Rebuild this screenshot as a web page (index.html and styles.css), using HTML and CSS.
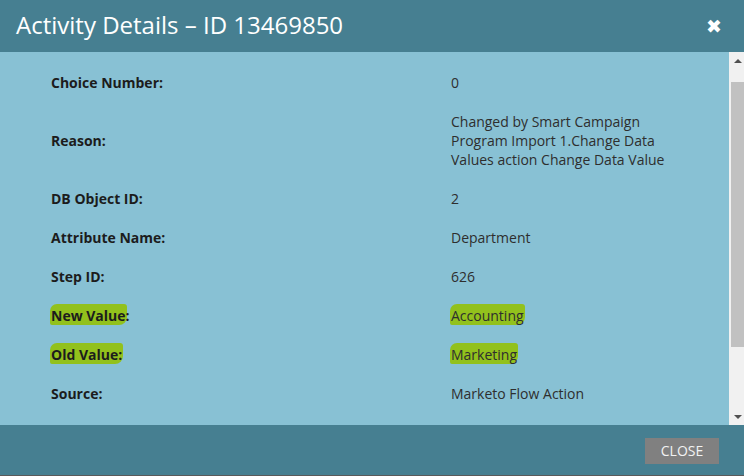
FILE: index.html
```html
<!DOCTYPE html>
<html>
<head>
<meta charset="utf-8">
<link rel="stylesheet" href="styles.css">
</head>
<body>
<div class="dialog">
  <div class="header">
    <div class="title">Activity Details – ID 13469850</div>
    <div class="close-x">&#x2716;</div>
  </div>
  <div class="body">
    <div class="content">
      <div class="details">
        <div class="label">Choice Number:</div><div class="value">0</div>
        <div class="label mid">Reason:</div><div class="value">Changed by Smart Campaign<br>Program Import 1.Change Data<br>Values action Change Data Value</div>
        <div class="label">DB Object ID:</div><div class="value">2</div>
        <div class="label">Attribute Name:</div><div class="value">Department</div>
        <div class="label">Step ID:</div><div class="value">626</div>
        <div class="label"><span class="hl">New Value</span>:</div><div class="value"><span class="hl">Accounting</span></div>
        <div class="label"><span class="hl">Old Value:</span></div><div class="value"><span class="hl">Marketing</span></div>
        <div class="label">Source:</div><div class="value">Marketo Flow Action</div>
      </div>
    </div>
    <div class="scrollbar">
      <div class="arrow up"></div>
      <div class="track"><div class="thumb"></div></div>
      <div class="arrow down"></div>
    </div>
  </div>
  <div class="footer">
    <div class="btn">CLOSE</div>
  </div>
  <div class="edge"></div>
</div>
</body>
</html>
```

FILE: styles.css
```css
html, body {
  margin: 0;
  padding: 0;
  width: 744px;
  height: 476px;
  overflow: hidden;
  font-family: "Open Sans", "Liberation Sans", sans-serif;
}
.dialog {
  display: flex;
  flex-direction: column;
  height: 476px;
}
.header {
  height: 52px;
  background: #467f91;
  display: flex;
  align-items: center;
  justify-content: space-between;
  padding: 0 22px 0 16px;
  flex: none;
}
.title {
  color: #ffffff;
  font-size: 24px;
  line-height: 30px;
  margin-top: -2px;
}
.close-x {
  color: #ffffff;
  font-size: 19px;
  line-height: 19px;
  font-family: "DejaVu Sans", sans-serif;
}
.body {
  height: 373px;
  background: #88c1d4;
  display: flex;
  flex: none;
}
.content {
  flex: 1;
  overflow: hidden;
  padding-top: 11px;
}
.details {
  display: grid;
  grid-template-columns: 400px 1fr;
  padding-left: 51px;
  font-size: 14px;
  line-height: 19px;
}
.label, .value {
  padding: 10px 0;
}
.label {
  font-weight: 700;
  color: #1c1c1c;
}
.label.mid {
  align-self: center;
}
.value {
  color: #2e2e2e;
}
.hl {
  background: #92c11c;
  border-radius: 7px 3px 8px 2px;
  padding: 2px 1px 0 1px;
  margin: 0 -1px;
}
.scrollbar {
  width: 15px;
  background: #f1f1f1;
  display: flex;
  flex-direction: column;
  flex: none;
}
.arrow {
  height: 17px;
  display: flex;
  justify-content: center;
  align-items: center;
  padding-left: 2px;
}
.arrow.up::before {
  content: "";
  border-left: 4px solid transparent;
  border-right: 4px solid transparent;
  border-bottom: 4px solid #505050;
}
.arrow.down::before {
  content: "";
  border-left: 4px solid transparent;
  border-right: 4px solid transparent;
  border-top: 4px solid #505050;
}
.track {
  flex: 1;
  padding-top: 13px;
  padding-left: 2px;
}
.thumb {
  height: 265px;
  background: #c1c1c1;
}
.footer {
  height: 50px;
  background: #467f91;
  display: flex;
  justify-content: flex-end;
  align-items: center;
  padding-right: 25px;
  flex: none;
}
.btn {
  width: 74px;
  height: 26px;
  background: #808080;
  color: #f2f2f2;
  font-size: 14px;
  line-height: 26px;
  text-align: center;
  margin-top: 1px;
}
.edge {
  height: 1px;
  background: #5a5a5a;
  flex: none;
}
```
